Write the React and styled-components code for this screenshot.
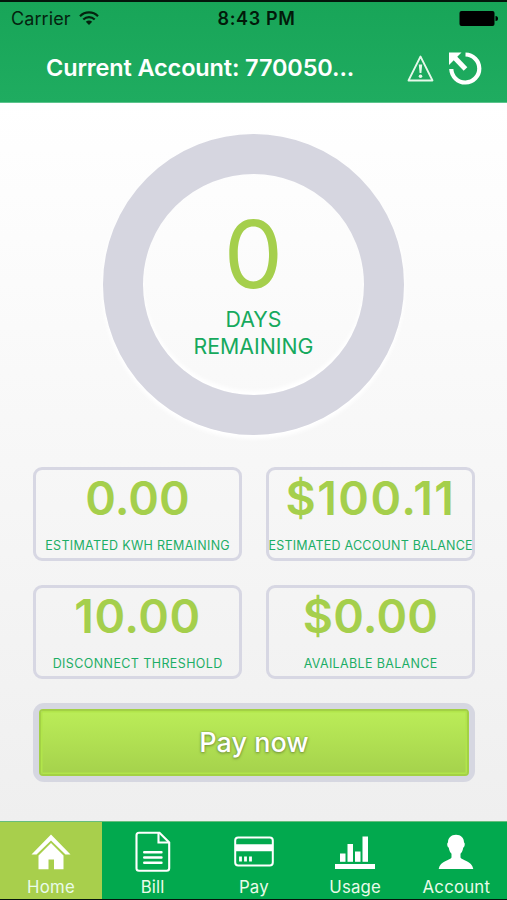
import React from "react";
import styled, { createGlobalStyle } from "styled-components";

const GlobalStyle = createGlobalStyle`
  * { box-sizing: border-box; }
  body { margin: 0; background: #000; font-family: Inter, "Liberation Sans", sans-serif; }
  button { font-family: inherit; }
`;

const Screen = styled.div`
  width: 507px;
  height: 900px;
  display: flex;
  flex-direction: column;
  overflow: hidden;
  border-top: 2px solid #04150b;
  border-bottom: 1px solid #04150b;
`;

const Header = styled.header`
  height: 101px;
  flex: none;
  background: linear-gradient(#18a558, #1fac60);
  border-bottom: 1px solid #5cc48d;
`;

const StatusBar = styled.div`
  height: 32px;
  display: grid;
  grid-template-columns: 1fr auto 1fr;
  align-items: center;
  padding: 0 9px 0 11px;
  color: #04230f;
`;

const Carrier = styled.div`
  display: flex;
  align-items: center;
  gap: 8px;
  font-size: 18px;
  letter-spacing: 0.1px;
`;

const Clock = styled.div`
  padding-left: 4px;
  font-weight: 600;
  font-size: 18px;
  letter-spacing: 0.65px;
  color: #021a0a;
`;

const BatterySlot = styled.div`
  display: flex;
  justify-content: flex-end;
`;

const TitleBar = styled.div`
  height: 68px;
  display: flex;
  align-items: center;
  padding: 0 25px 0 46px;
`;

const Title = styled.h1`
  margin: 0;
  width: 362px;
  color: #fff;
  font-size: 23.5px;
  line-height: 30px;
  font-weight: 600;
  letter-spacing: -0.14px;
  white-space: nowrap;
`;

const HeaderActions = styled.div`
  display: flex;
  align-items: center;
  gap: 14px;
`;

const Main = styled.main`
  flex: 1;
  min-height: 0;
  padding: 31px 32px 0 33px;
  background: linear-gradient(#fff, #efefef);
`;

const Gauge = styled.section`
  width: 301px;
  height: 301px;
  margin: 0 auto 32px 70px;
  border: 40px solid #d6d6e0;
  border-radius: 50%;
  box-shadow: 0 3px 4px 1px #fff, inset 0 -4px 4px #fff;
  display: flex;
  flex-direction: column;
  align-items: center;
`;

const GaugeValue = styled.div`
  margin-top: 22px;
  height: 116px;
  line-height: 116px;
  font-size: 94px;
  font-weight: 400;
  color: #a5cf4c;
`;

const GaugeLabel = styled.div`
  width: 160px;
  margin-top: -6px;
  text-align: center;
  font-size: 21.3px;
  line-height: 26.5px;
  color: #16a95d;
`;

const Stats = styled.section`
  display: grid;
  grid-template-columns: 209px 209px;
  gap: 24px;
`;

const StatCard = styled.div`
  height: 94px;
  border: 3px solid #d7d7e3;
  border-radius: 9px;
  display: flex;
  flex-direction: column;
  align-items: center;
  white-space: nowrap;
`;

const StatValue = styled.div`
  height: 56px;
  line-height: 56px;
  font-size: 46.5px;
  font-weight: 570;
  letter-spacing: ${(p) => p.$spacing}px;
  color: #a5cf4c;
`;

const StatLabel = styled.div`
  margin-top: 11px;
  line-height: 17px;
  font-size: 12.5px;
  font-weight: 420;
  letter-spacing: ${(p) => p.$spacing}px;
  margin-right: -${(p) => p.$spacing}px;
  color: #1cae66;
`;

const PayFrame = styled.div`
  margin-top: 24px;
  width: 442px;
  height: 79px;
  padding: 6px;
  border-radius: 11px;
  background: #d6d7e1;
`;

const PayButton = styled.button`
  display: block;
  width: 100%;
  height: 100%;
  padding: 0;
  border: 2px solid #a3d145;
  border-radius: 4px;
  background: linear-gradient(#bbed58, #a5d24c) padding-box;
  box-shadow: inset 0 0 0 1.5px #b1e54b;
  color: #fff;
  font-size: 27px;
  font-weight: 500;
  text-shadow: 0 1px 3px #6f8f36, 0 0 2px #7a9b40;
`;

const Tabs = styled.nav`
  flex: none;
  height: 78px;
  display: grid;
  grid-template-columns: 102px repeat(4, 101.25px);
  border-top: 1px solid #67bd7c;
  background: #02a94e;
`;

const Tab = styled.a`
  display: flex;
  flex-direction: column;
  align-items: center;
  padding-top: 8px;
  color: #fff;
  background: ${(p) => (p.$active ? "#a8cf4c" : "transparent")};
`;

const TabLabel = styled.span`
  margin-top: 5px;
  line-height: 20px;
  font-size: 16.8px;
  letter-spacing: 0.2px;
  color: #e9fbe9;
`;

const WifiIcon = () => (
  <svg width="20" height="15" viewBox="0 0 20 15" fill="none" stroke="#04230f" strokeWidth="2.2">
    <path d="M1 5.2C6 .2 14 .2 19 5.2" />
    <path d="M4.3 8.5C7.6 5.4 12.4 5.4 15.7 8.5" />
    <path d="M10 14 6.8 10.8Q10 8.3 13.2 10.8Z" fill="#04230f" stroke="none" />
  </svg>
);

const BatteryIcon = () => (
  <svg width="39" height="15" viewBox="0 0 39 15" fill="#000">
    <rect x="0.5" width="35" height="15" rx="2" />
    <path d="M36.5 5q2.5 0 2.5 2.5t-2.5 2.5z" />
  </svg>
);

const WarningIcon = () => (
  <svg width="27" height="27" viewBox="0 0 27 27" fill="none" stroke="#e6f8ea" strokeWidth="1.8" strokeLinejoin="round">
    <path d="M13.5 1.5 25.5 25.5H1.5Z" />
    <path d="M11.8 9.5h3.4l-.8 8.5h-1.8z" fill="#e6f8ea" stroke="none" />
    <circle cx="13.5" cy="21.2" r="1.8" fill="#e6f8ea" stroke="none" />
  </svg>
);

const RefreshIcon = () => (
  <svg width="34" height="33" viewBox="0 0 34 33" fill="none" stroke="#fff" strokeWidth="4.2">
    <path d="M17.5 2.5A14 14 0 1 1 3.3 17" />
    <path d="M6.5 5.5 17.5 17" strokeWidth="5" />
    <path d="M1 .5H13.5L1 13Z" fill="#fff" stroke="none" />
  </svg>
);

const HomeIcon = () => (
  <svg width="40" height="42" viewBox="0 0 40 42" fill="#fff">
    <path d="M.5 24.5 20 4.5 39.5 24.5H34.5L20 10.5 5.5 24.5Z" />
    <path d="M20 13 32.5 25.5V39.3H23V29.5H17.5V39.3H7.5V25.5Z" />
  </svg>
);

const BillIcon = () => (
  <svg width="38" height="42" viewBox="0 0 38 42" fill="none" stroke="#fff" strokeWidth="2.1">
    <path d="M5 2.8H25.5L35.2 12.5V38.2q0 2.500-2.500 2.500H5Q2.500 40.700 2.500 38.200V5.300Q2.500 2.800 5 2.800Z" />
    <path d="M24.500 2.800V12.500H35" />
    <path d="M10.200 22.300H27.500M10.200 27.500H27.500M10.200 32.700H27.500" strokeWidth="2.400" strokeLinecap="round" />
  </svg>
);

const PayIcon = () => (
  <svg width="40" height="42" viewBox="0 0 40 42" fill="none" stroke="#fff" strokeWidth="2">
    <rect x="1.2" y="7.6" width="37.6" height="28" rx="3" />
    <path d="M1 17.7H39" strokeWidth="7" />
    <path d="M6.5 26.500v5M11.500 26.500v5M16.500 26.500v5" strokeWidth="2.800" />
  </svg>
);

const UsageIcon = () => (
  <svg width="40" height="42" viewBox="0 0 40 42" fill="#fff">
    <rect x="5" y="23.5" width="5.5" height="8.3" />
    <rect x="12.5" y="14" width="5.5" height="17.8" />
    <rect x="20" y="21.5" width="5.5" height="10.3" />
    <rect x="27.5" y="6.5" width="5.5" height="25.3" />
    <rect y="34" width="40" height="5" />
  </svg>
);

const AccountIcon = () => (
  <svg width="36" height="42" viewBox="0 0 36 42" fill="#fff">
    <path d="M18 4.8C13 4.8 10 8 10 12.5C8.8 12.5 9 17 10.7 17.5C11.3 21 12.3 22.5 13.5 23.7V27.5C12.5 30.5 2 30.5 .7 39H35.3C34 30.5 23.5 30.5 22.5 27.5V23.7C23.7 22.5 24.7 21 25.3 17.5C27 17 27.2 12.5 26 12.5C26 8 23 4.8 18 4.8Z" />
  </svg>
);

const stats = [
  { value: "0.00", label: "ESTIMATED KWH REMAINING", valueSpacing: 0, labelSpacing: 0.3 },
  { value: "$100.11", label: "ESTIMATED ACCOUNT BALANCE", valueSpacing: 1.4, labelSpacing: 0.22 },
  { value: "10.00", label: "DISCONNECT THRESHOLD", valueSpacing: 0.5, labelSpacing: 0.4 },
  { value: "$0.00", label: "AVAILABLE BALANCE", valueSpacing: 0.2, labelSpacing: 0.35 },
];

const tabs = [
  { label: "Home", Icon: HomeIcon, active: true },
  { label: "Bill", Icon: BillIcon },
  { label: "Pay", Icon: PayIcon },
  { label: "Usage", Icon: UsageIcon },
  { label: "Account", Icon: AccountIcon },
];

export default function App() {
  return (
    <>
      <GlobalStyle />
      <Screen>
        <Header>
          <StatusBar>
            <Carrier>
              Carrier
              <WifiIcon />
            </Carrier>
            <Clock>8:43 PM</Clock>
            <BatterySlot>
              <BatteryIcon />
            </BatterySlot>
          </StatusBar>
          <TitleBar>
            <Title>Current Account: 770050...</Title>
            <HeaderActions>
              <WarningIcon />
              <RefreshIcon />
            </HeaderActions>
          </TitleBar>
        </Header>
        <Main>
          <Gauge>
            <GaugeValue>0</GaugeValue>
            <GaugeLabel>DAYS REMAINING</GaugeLabel>
          </Gauge>
          <Stats>
            {stats.map((s) => (
              <StatCard key={s.label}>
                <StatValue $spacing={s.valueSpacing}>{s.value}</StatValue>
                <StatLabel $spacing={s.labelSpacing}>{s.label}</StatLabel>
              </StatCard>
            ))}
          </Stats>
          <PayFrame>
            <PayButton>Pay now</PayButton>
          </PayFrame>
        </Main>
        <Tabs>
          {tabs.map(({ label, Icon, active }) => (
            <Tab key={label} $active={active}>
              <Icon />
              <TabLabel>{label}</TabLabel>
            </Tab>
          ))}
        </Tabs>
      </Screen>
    </>
  );
}
